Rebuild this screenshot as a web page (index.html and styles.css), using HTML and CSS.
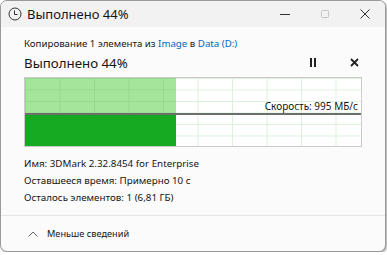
FILE: index.html
```html
<!DOCTYPE html>
<html lang="ru">
<head>
    <meta charset="UTF-8">
    <title>Выполнено 44%</title>
    <link rel="stylesheet" href="styles.css">
</head>
<body>
    <div class="window">
        <div class="titlebar">
            <svg class="title-icon" width="14" height="14" viewBox="0 0 14 14">
                <circle cx="7" cy="7" r="6" fill="none" stroke="#333" stroke-width="1"/>
                <path d="M6.5 3.5 V7.5 H9.5" fill="none" stroke="#333" stroke-width="1"/>
            </svg>
            <span class="title">Выполнено 44%</span>
            <div class="controls">
                <span class="ctl"><svg width="10" height="10" viewBox="0 0 10 10"><path d="M0 5.5 H10" stroke="#333" stroke-width="1"/></svg></span>
                <span class="ctl"><svg width="10" height="10" viewBox="0 0 10 10"><rect x="1.5" y="1.5" width="7" height="7" rx="1" fill="none" stroke="#c4c4c4" stroke-width="1"/></svg></span>
                <span class="ctl"><svg width="10" height="10" viewBox="0 0 10 10"><path d="M0.5 0.5 L9.5 9.5 M9.5 0.5 L0.5 9.5" stroke="#333" stroke-width="1"/></svg></span>
            </div>
        </div>
        <div class="content">
            <div class="copy-line">Копирование 1 элемента из <span class="link">Image</span> в <span class="link">Data (D:)</span></div>
            <div class="status-row">
                <span class="status">Выполнено 44%</span>
                <div class="actions">
                    <svg width="8" height="9" viewBox="0 0 8 9"><rect x="1" y="0" width="2" height="9" fill="#222"/><rect x="5" y="0" width="2" height="9" fill="#222"/></svg>
                    <svg width="9" height="9" viewBox="0 0 9 9"><path d="M1 1 L8 8 M8 1 L1 8" stroke="#222" stroke-width="1.8"/></svg>
                </div>
            </div>
            <div class="graph">
                <div class="done" style="width: 151px">
                    <div class="done-top"></div>
                    <div class="done-bottom"></div>
                </div>
                <div class="speed-line"></div>
                <span class="speed">Скорость: 995 МБ/с</span>
            </div>
            <div class="details">
                <div>Имя: 3DMark 2.32.8454 for Enterprise</div>
                <div>Оставшееся время: Примерно 10 с</div>
                <div>Осталось элементов: 1 (6,81 ГБ)</div>
            </div>
        </div>
        <div class="footer">
            <svg width="10" height="6" viewBox="0 0 10 6"><path d="M0.5 5.5 L5 1 L9.5 5.5" fill="none" stroke="#666" stroke-width="1"/></svg>
            <span>Меньше сведений</span>
        </div>
    </div>
</body>
</html>
```

FILE: styles.css
```css
body {
    margin: 0;
    background-color: #ffffff;
    font-family: "Noto Sans", "Open Sans", sans-serif;
    color: #151515;
}
.window {
    width: 384px;
    height: 250px;
    border: 1px solid #9a9a9a;
    border-radius: 7px;
    background-color: #fbfbfb;
    box-shadow: 1px 1px 2px rgba(0, 0, 0, 0.35);
    overflow: hidden;
    display: flex;
    flex-direction: column;
}
.titlebar {
    height: 26px;
    background-color: #f2f2f2;
    display: flex;
    align-items: center;
    flex-shrink: 0;
}
.title-icon {
    margin-left: 7px;
    margin-right: 5px;
}
.title {
    font-size: 13px;
}
.controls {
    margin-left: auto;
    display: flex;
}
.ctl {
    width: 40px;
    height: 26px;
    display: flex;
    justify-content: center;
    align-items: center;
}
.content {
    padding: 8px 23px 0 23px;
    flex: 1;
    border-bottom: 1px solid #e5e5e5;
}
.copy-line {
    font-size: 9.7px;
    height: 17px;
    line-height: 17px;
}
.link {
    color: #0067c0;
}
.status-row {
    display: flex;
    align-items: center;
    height: 21px;
    margin-bottom: 4px;
}
.status {
    font-size: 13.3px;
}
.actions {
    margin-left: auto;
    display: flex;
    align-items: center;
    gap: 33px;
    margin-right: 3px;
}
.graph {
    position: relative;
    height: 68px;
    border: 1px solid #cacaca;
    background-color: #ffffff;
    background-image:
        linear-gradient(to right, #dcf2dc 1px, transparent 1px),
        linear-gradient(to bottom, #dcf2dc 1px, transparent 1px);
    background-size: 34.5px 11.5px;
    background-position: 0 0;
}
.done {
    height: 100%;
    display: flex;
    flex-direction: column;
}
.done-top {
    height: 35px;
    background-color: #a4e49b;
    background-image:
        linear-gradient(to right, #96d88d 1px, transparent 1px),
        linear-gradient(to bottom, #96d88d 1px, transparent 1px);
    background-size: 34.5px 11.5px;
}
.done-bottom {
    flex: 1;
    background-color: #16a922;
}
.speed-line {
    position: absolute;
    left: 0;
    right: 0;
    top: 35px;
    height: 2px;
    background-color: #6e6e6e;
}
.speed {
    position: absolute;
    right: 3px;
    top: 22px;
    font-size: 10px;
    line-height: 13px;
}
.details {
    padding-top: 8px;
    font-size: 9.8px;
    line-height: 17px;
}
.footer {
    height: 35px;
    display: flex;
    align-items: center;
    padding-left: 27px;
    gap: 9px;
    font-size: 9.2px;
    flex-shrink: 0;
}
```
